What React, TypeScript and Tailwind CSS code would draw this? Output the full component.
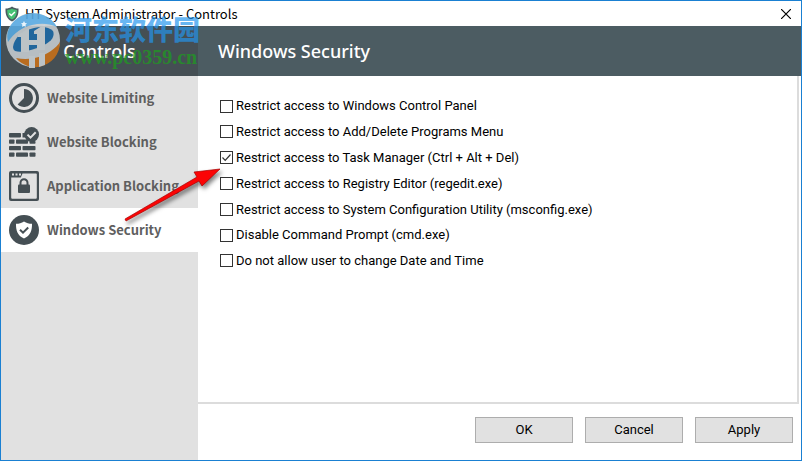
import React, { useState } from "react";

const options = [
  { id: "control-panel", label: "Restrict access to Windows Control Panel" },
  { id: "programs", label: "Restrict access to Add/Delete Programs Menu" },
  { id: "task-manager", label: "Restrict access to Task Manager (Ctrl + Alt + Del)" },
  { id: "registry", label: "Restrict access to Registry Editor (regedit.exe)" },
  { id: "msconfig", label: "Restrict access to System Configuration Utility (msconfig.exe)" },
  { id: "cmd", label: "Disable Command Prompt (cmd.exe)" },
  { id: "date-time", label: "Do not allow user to change Date and Time" },
];

function LimitingIcon() {
  return (
    <svg viewBox="0 0 30 30" className="size-[30px] shrink-0">
      <circle cx="15" cy="15" r="13.5" fill="none" stroke="#454f54" strokeWidth="3" />
      <path d="M15 6a9 9 0 1 1-6.4 15.4L15 15z" fill="#454f54" />
    </svg>
  );
}

function BlockingIcon() {
  return (
    <svg viewBox="0 0 30 30" className="size-[30px] shrink-0" fill="#454f54">
      <rect x="0" y="6" width="12" height="4.4" rx="0.8" />
      <path d="M13.5 6h3l1.5 4.4h-4.5z" />
      <rect x="0" y="12.5" width="5.5" height="4.2" rx="0.8" />
      <rect x="7" y="12.5" width="12" height="4.2" rx="0.8" />
      <rect x="20.5" y="14" width="6" height="2.7" rx="0.8" />
      <rect x="0" y="19" width="12" height="4.2" rx="0.8" />
      <rect x="13.5" y="19" width="13" height="4.2" rx="0.8" />
      <rect x="0" y="25.5" width="5.5" height="4.2" rx="0.8" />
      <rect x="7" y="25.5" width="12" height="4.2" rx="0.8" />
      <rect x="20.5" y="25.5" width="6" height="4.2" rx="0.8" />
      <circle cx="22.6" cy="7.4" r="7.4" />
      <path d="M18.5 7.6l3 3 5.2-5.4" fill="none" stroke="#e1e1e1" strokeWidth="2" />
    </svg>
  );
}

function ApplicationIcon() {
  return (
    <svg viewBox="0 0 30 30" className="size-[30px] shrink-0">
      <rect width="30" height="30" rx="2" fill="#454f54" />
      <path d="M13.5 2.5H27a.8.8 0 0 1 .8.8v23.4a1 1 0 0 1-1 1H3.2a1 1 0 0 1-1-1V6.5h9.6z" fill="#e1e1e1" />
      <path d="M3 2.5h2v2H3zM6.5 2.5h2v2h-2zM10 2.5h2v2h-2z" fill="#e1e1e1" />
      <rect x="9" y="13.5" width="12" height="8.5" rx="1" fill="#454f54" />
      <path d="M11.5 14v-2.2a3.5 3.5 0 0 1 7 0V14" fill="none" stroke="#454f54" strokeWidth="2" />
    </svg>
  );
}

function SecurityIcon() {
  return (
    <svg viewBox="0 0 30 30" className="size-[30px] shrink-0">
      <circle cx="15" cy="15" r="15" fill="#454f54" />
      <path d="M15 6.5c2.5 1.8 5 2.3 8 2.3.2 6.2-1.5 12-8 14.7-6.5-2.7-8.2-8.5-8-14.7 3 0 5.5-.5 8-2.3z" fill="#fff" />
      <path d="M11 14.7l3 3 5.2-5.2" fill="none" stroke="#454f54" strokeWidth="2" />
    </svg>
  );
}

const tabs = [
  { label: "Website Limiting", icon: <LimitingIcon /> },
  { label: "Website Blocking", icon: <BlockingIcon /> },
  { label: "Application Blocking", icon: <ApplicationIcon /> },
  { label: "Windows Security", icon: <SecurityIcon />, active: true },
];

function Watermark() {
  return (
    <div className="pointer-events-none absolute top-3 left-1 flex gap-0.5">
      <svg viewBox="0 0 58 56" className="h-14 w-[58px] opacity-90">
        <circle cx="28" cy="27" r="27" fill="#c4cbcf" />
        <path d="M3 18C7 7 17 .5 28 .3 38 .5 47 5 52 14c-8-4-17-4-25-2-10 2-18 8-24 17-1-4-1-8 0-11z" fill="#58a9e0" />
        <path d="M8 34c1-9 9-16 21-19 8-2 15-1 19 3 2 5-1 10-9 14-10 5-22 8-29 6-1-1-2-2-2-4z" fill="#1d69a4" />
        <path d="M55 29c0 12-8 22-21 25-10 1-18-3-23-9 9 2 17 1 26-2 8-4 14-8 18-14z" fill="#c5701a" />
        <path d="M13 22l11-7v24h-8V24h-3zM29 18l11-7v26h-8V21h-3z" fill="#c9d0d3" />
        <path d="M23 27h10v5H23z" fill="#c9d0d3" />
        <path d="M24 43h6v12h-6zM34 40h6v12l-6 2z" fill="#c9d0d3" />
        <path d="M19 8l1 2 2 .3-1.5 1.5.4 2.2-1.9-1-2 1 .4-2.2-1.4-1.5 2-.3z" fill="#e7f3fb" />
      </svg>
      <div className="flex flex-col">
        <span className="font-['Noto_Sans_CJK_SC',sans-serif] text-[27px] leading-8 font-black whitespace-nowrap text-[#2496ed]/70">
          河东软件园
        </span>
        <span className="font-['Liberation_Serif',serif] text-[20px] leading-6 font-bold whitespace-nowrap text-[#1f9a22]/75">
          www.pc0359.cn
        </span>
      </div>
    </div>
  );
}

function Arrow() {
  return (
    <svg viewBox="0 0 110 66" className="pointer-events-none absolute top-[162px] left-[120px] h-[66px] w-[110px]">
      <g style={{ filter: "drop-shadow(2px 3px 2px rgb(0 0 0 / 0.5))" }}>
        <path d="M99 6L81 23l-3-5L5 58 4 56 76 14l-3-5z" fill="#fb0405" stroke="#a80000" strokeWidth="0.7" />
      </g>
    </svg>
  );
}

function App() {
  const [checked, setChecked] = useState<string[]>(["task-manager"]);

  const toggle = (id: string) => {
    setChecked(checked.includes(id) ? checked.filter((c) => c !== id) : [...checked, id]);
  };

  return (
    <div className="relative flex min-h-screen flex-col border border-[#1a80d2] bg-white font-['Roboto',sans-serif] text-[13px] text-black">
      <div className="flex h-[25px] items-center justify-between pr-2 pl-1">
        <div className="flex items-center gap-1.5">
          <svg viewBox="0 0 14 16" className="h-4 w-3.5 shrink-0">
            <path d="M7 .5c2 1.5 4 2 6.5 2 .2 6-1 10.5-6.5 13C1.5 13 .3 8.5.5 2.5 3 2.5 5 2 7 .5z" fill="#4a5b60" />
            <path d="M7 2.5c1.5 1 3 1.3 4.8 1.4 0 4.6-1 7.7-4.8 9.6-3.8-1.900-4.8-5-4.8-9.600C4 3.800 5.500 3.500 7 2.500z" fill="#46c274" />
            <path d="M4.3 7.6l2 2 3.6-3.7" fill="none" stroke="#fff" strokeWidth="1.4" />
          </svg>
          <span className="font-['Noto_Sans_CJK_SC',sans-serif]">HT System Administrator - Controls</span>
        </div>
        <button aria-label="Close" className="flex size-3.5 items-center justify-center">
          <svg viewBox="0 0 10 10" className="size-2.5">
            <path d="M0 0l10 10M10 0L0 10" stroke="#000" strokeWidth="1.2" />
          </svg>
        </button>
      </div>
      <div className="flex flex-1">
        <aside className="flex w-[197px] shrink-0 flex-col bg-[#e1e1e1]">
          <h2 className="flex h-[50px] items-center justify-center bg-[#454f54] font-['Noto_Sans',sans-serif] text-lg font-medium text-white">
            Controls
          </h2>
          <nav className="flex flex-col font-['Noto_Sans_CJK_SC',sans-serif]">
            {tabs.map((tab) => (
              <button
                key={tab.label}
                className={`flex h-11 items-center gap-2 pl-2 font-bold whitespace-nowrap text-[#5f5f5f] ${tab.active ? "bg-white" : ""}`}
              >
                {tab.icon}
                {tab.label}
              </button>
            ))}
          </nav>
        </aside>
        <main className="flex flex-1 flex-col">
          <h1 className="flex h-[50px] items-center bg-[#4c5c62] pl-5 font-['Noto_Sans',sans-serif] text-lg font-medium text-white">
            Windows Security
          </h1>
          <div className="mr-0.5 flex-1 border-r-2 border-b-2 border-[#dcdcdc] pt-5 pl-[22px]">
            <div className="flex h-[175px] flex-col justify-between">
              {options.map((option) => (
                <label key={option.id} htmlFor={option.id} className="flex h-5 items-center gap-[3px]">
                  <span className="grid size-[13px] shrink-0">
                    <input
                      id={option.id}
                      type="checkbox"
                      checked={checked.includes(option.id)}
                      onChange={() => toggle(option.id)}
                      className="peer col-start-1 row-start-1 size-[13px] appearance-none border border-[#333] bg-white"
                    />
                    <svg
                      viewBox="0 0 13 13"
                      className="pointer-events-none col-start-1 row-start-1 hidden size-[13px] peer-checked:block"
                    >
                      <path d="M2.5 6.5l2.7 2.8 5.3-5.8" fill="none" stroke="#333" strokeWidth="1.2" />
                    </svg>
                  </span>
                  {option.label}
                </label>
              ))}
            </div>
          </div>
          <div className="flex justify-end gap-3 pt-[13px] pr-2 pb-[17px]">
            {["OK", "Cancel", "Apply"].map((name) => (
              <button key={name} className="h-[26px] w-[98px] border border-[#adadad] bg-[#e1e1e1]">
                {name}
              </button>
            ))}
          </div>
        </main>
      </div>
      <Watermark />
      <Arrow />
    </div>
  );
}

export default App;
